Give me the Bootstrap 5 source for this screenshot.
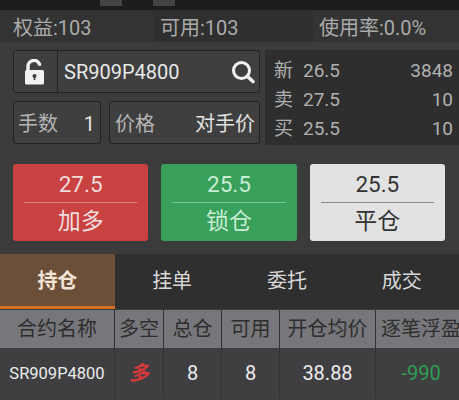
<!DOCTYPE html>
<html lang="zh"><head><meta charset="utf-8"><title>交易</title>
<link href="https://cdn.jsdelivr.net/npm/bootstrap@5.3.0/dist/css/bootstrap.min.css" rel="stylesheet">
<style>
html,body{margin:0;height:400px;overflow:hidden;background:#3b3b3b}
body{font-family:Roboto,"Noto Sans CJK SC",sans-serif;color:#cfcfcf;width:459px}
.topstrip{height:10px;background:#1d1d1d;padding-left:100px;gap:31px}
.topstrip span{width:22px;height:6px;background:#444}
.statbar{height:32px;background:#333;font-size:20px;color:#aaa;line-height:36px;white-space:nowrap}
.statbar>div{padding-left:13px}
.st1{width:153px}.st2{width:160px;background:#2f2f2f;padding-left:7px!important}.st3{flex:1;padding-left:6px!important}
.upper{padding:8px 0 0 13px;gap:5px}
.leftcol{width:247px;gap:8px}
.framebox{height:43px;border:1px solid #222;border-radius:3px;background:#3f3f3f}
.lockpart{width:44px;border-right:1px solid #222;padding-right:2px}
.codetxt{font-size:20px;color:#e8e8e8;padding-left:6px}
.qtybox{width:88px;padding:3px 5px 0 4px}
.pricebox{flex:1;padding:2px 4px 0 5px}
.lbl{font-size:20px;color:#b5b5b5}
.val{font-size:20px;color:#e2e2e2}
.quote{width:194px;height:95px;background:#2e2e2e;padding:6px 6px 3px 9px;font-size:19px;color:#b0b0b0}
.qrow{height:29px;line-height:29px}
.qname{width:29px}
.tradebtns{padding:19px 14px 0 13px;gap:13px}
.tbtn{flex:1;height:77px;border-radius:3px;padding:0 11px;text-align:center;color:#f0dcdc}
.tbtn hr{margin:0;opacity:1;border-top:1px solid currentColor}
.tp{height:38px;line-height:41px;font-size:22.5px}
.tn{height:38px;line-height:38px;font-size:23px}
.b-red{background:#c94242}.b-red hr{color:#dd8585}
.b-green{background:#38a05a;color:#c9ecd4}.b-green hr{color:#7cc596}
.b-light{background:#e2e2e2;color:#333}.b-light hr{color:#888}
.tabsbar{margin-top:13px;height:55px;background:#2f2f2f;font-size:20px;color:#d8d8d8}
.tabitem{width:114.75px;text-align:center;line-height:55px}
.tabitem.on{background:#6c4f39;border-bottom:3px solid #d66f22;color:#f3e4d6;font-weight:700}
.hdr,.rowd{display:grid;grid-template-columns:115px 49px 58px 58px 96px 83px;margin-top:1px}
.hdr{height:38px;background:#77777b;color:#2e2e2e;font-size:20px;line-height:38px;text-align:center;white-space:nowrap}
.rowd{margin-top:0;height:51px;background:#3f3f42;color:#ececec;font-size:20px;line-height:51px;text-align:center}
.hdr>div,.rowd>div{border-right:1px solid #333;overflow:hidden}
.hdr>div:last-child,.rowd>div:last-child{border-right:0}
.hdr>div:last-child{text-align:left;padding-left:5px}
.rowd .codec{font-size:16.5px}
.lng{color:#d83a3a;font-style:italic;font-weight:700}
.neg{color:#2f9e52;padding-left:7px}
</style></head><body>
<div class="topstrip d-flex"><span></span><span></span></div>
<div class="statbar d-flex"><div class="st1">权益:103</div><div class="st2">可用:103</div><div class="st3">使用率:0.0%</div></div>
<div class="upper d-flex">
  <div class="leftcol d-flex flex-column">
    <div class="framebox d-flex align-items-stretch">
      <div class="lockpart d-flex align-items-center justify-content-center">
        <svg width="21" height="26" viewBox="0 0 21 26"><path d="M4 12V7.5a6 6 0 0 1 11.6-2.2" fill="none" stroke="#f2f2f2" stroke-width="3.4" stroke-linecap="round"/><rect x="1" y="11" width="19" height="14.5" rx="1.5" fill="#f2f2f2"/><circle cx="10.5" cy="17" r="2" fill="#3f3f3f"/><rect x="9.7" y="17" width="1.6" height="4" fill="#3f3f3f"/></svg>
      </div>
      <div class="codetxt flex-grow-1 d-flex align-items-center justify-content-between pe-1">SR909P4800
        <svg width="24" height="24" viewBox="0 0 24 24" class="me-0"><circle cx="10.5" cy="10.5" r="8" fill="none" stroke="#f2f2f2" stroke-width="3"/><path d="M16.5 16.5l5.5 5" stroke="#f2f2f2" stroke-width="3.6" stroke-linecap="round"/></svg>
      </div>
    </div>
    <div class="d-flex gap-2">
      <div class="framebox qtybox d-flex align-items-center justify-content-between"><span class="lbl">手数</span><span class="val">1</span></div>
      <div class="framebox pricebox d-flex align-items-center justify-content-between"><span class="lbl">价格</span><span class="val">对手价</span></div>
    </div>
  </div>
  <div class="quote">
    <div class="qrow d-flex"><span class="qname">新</span><span>26.5</span><span class="ms-auto">3848</span></div>
    <div class="qrow d-flex"><span class="qname">卖</span><span>27.5</span><span class="ms-auto">10</span></div>
    <div class="qrow d-flex"><span class="qname">买</span><span>25.5</span><span class="ms-auto">10</span></div>
  </div>
</div>
<div class="tradebtns d-flex">
  <div class="tbtn b-red"><div class="tp">27.5</div><hr><div class="tn">加多</div></div>
  <div class="tbtn b-green"><div class="tp">25.5</div><hr><div class="tn">锁仓</div></div>
  <div class="tbtn b-light"><div class="tp">25.5</div><hr><div class="tn">平仓</div></div>
</div>
<div class="tabsbar d-flex">
  <div class="tabitem on">持仓</div><div class="tabitem">挂单</div><div class="tabitem">委托</div><div class="tabitem">成交</div>
</div>
<div class="hdr"><div>合约名称</div><div>多空</div><div>总仓</div><div>可用</div><div>开仓均价</div><div>逐笔浮盈</div></div>
<div class="rowd"><div class="codec">SR909P4800</div><div class="lng">多</div><div>8</div><div>8</div><div>38.88</div><div class="neg">-990</div></div>
<script src="https://cdn.jsdelivr.net/npm/bootstrap@5.3.0/dist/js/bootstrap.bundle.min.js"></script>
</body></html>
